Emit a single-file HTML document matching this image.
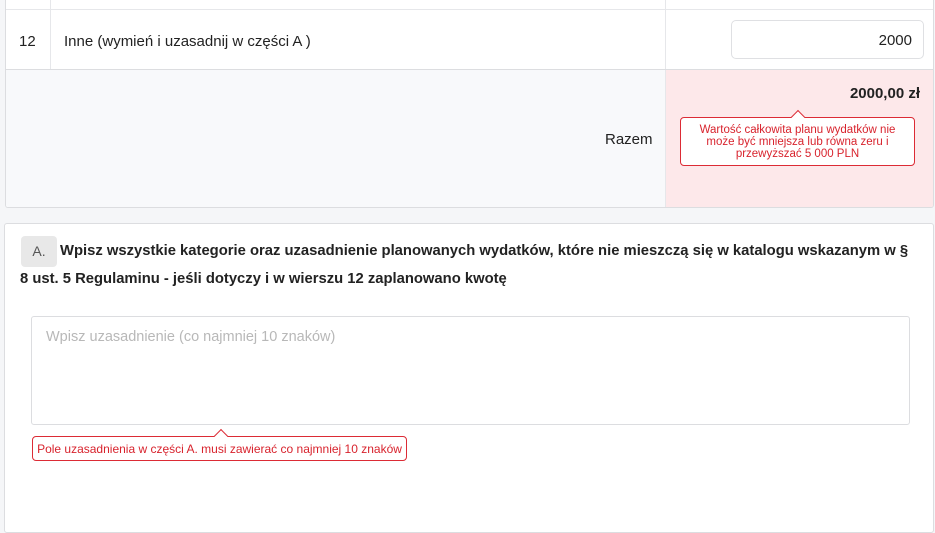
<!DOCTYPE html>
<html><head><meta charset="utf-8"><style>
*{box-sizing:border-box;margin:0;padding:0}
body{width:935px;height:520px;overflow:hidden;background:#f5f6f8;font-family:"Liberation Sans",sans-serif;color:#222;position:relative}
.abs{position:absolute}
.card1{left:5px;top:-2px;width:929px;height:210px;background:#fff;border:1px solid #dcdde0;border-top:none;border-radius:0 0 3px 3px;overflow:hidden}
.line{background:#e6e7ea}
.tip{position:absolute;border:1px solid #dc2b35;border-radius:4px;background:#fff;color:#d8232d;text-align:center;font-size:11.5px;line-height:12px}
.tip:before{content:"";position:absolute;top:-6px;width:9px;height:9px;background:#fff;border-left:1px solid #dc2b35;border-top:1px solid #dc2b35;transform:rotate(45deg)}
.t1:before{left:112px}
.t2:before{left:183px}
</style></head><body>
<div class="abs card1">
  <div class="abs line" style="left:0;top:11px;width:929px;height:1px"></div>
  <div class="abs line" style="left:44px;top:0;width:1px;height:72px"></div>
  <div class="abs line" style="left:659px;top:0;width:1px;height:210px"></div>
  <div class="abs line" style="left:0;top:71px;width:929px;height:1px;background:#dcdde0"></div>
  <div class="abs" style="left:0;top:72px;width:659px;height:138px;background:#f8f9fb"></div>
  <div class="abs" style="left:660px;top:72px;width:269px;height:138px;background:#fde8ea"></div>
  <div class="abs" style="left:13px;top:35px;font-size:15px">12</div>
  <div class="abs" style="left:58px;top:35px;font-size:15px">Inne (wymień i uzasadnij w części A )</div>
  <div class="abs" style="left:725px;top:22px;width:193px;height:39px;border:1px solid #dfe0e3;border-radius:5px;font-size:15px;text-align:right;padding:11px 11px">2000</div>
  <div class="abs" style="left:822px;top:87px;font-size:15px;font-weight:bold;width:92px;text-align:right">2000,00 zł</div>
  <div class="abs" style="left:599px;top:133px;font-size:15px">Razem</div>
</div>
<div class="tip t1" style="left:680px;top:117px;width:235px;height:49px;padding:6px 4px 0">Wartość całkowita planu wydatków nie może być mniejsza lub równa zeru i przewyższać 5 000 PLN</div>
<div class="abs" style="left:4px;top:223px;width:930px;height:310px;background:#fff;border:1px solid #dcdde0;border-radius:3px"></div>
<div class="abs" style="left:21px;top:236px;width:36px;height:31px;background:#e8e8e8;border-radius:4px;color:#555;font-size:14px;text-align:center;line-height:31px">A.</div>
<div class="abs" style="left:20px;top:237px;width:912px;font-size:14.8px;font-weight:bold;line-height:28px;text-indent:40px;letter-spacing:0;white-space:nowrap">Wpisz wszystkie kategorie oraz uzasadnienie planowanych wydatków, które nie mieszczą się w katalogu wskazanym w §<br>8 ust. 5 Regulaminu - jeśli dotyczy i w wierszu 12 zaplanowano kwotę</div>
<div class="abs" style="left:31px;top:316px;width:879px;height:109px;border:1px solid #dcdde0;border-radius:3px;color:#b8b8b8;font-size:14.5px;padding:12px 14px">Wpisz uzasadnienie (co najmniej 10 znaków)</div>
<div class="tip t2" style="left:32px;top:436px;width:375px;height:25px;padding-top:6px;font-size:12px">Pole uzasadnienia w części A. musi zawierać co najmniej 10 znaków</div>
</body></html>
